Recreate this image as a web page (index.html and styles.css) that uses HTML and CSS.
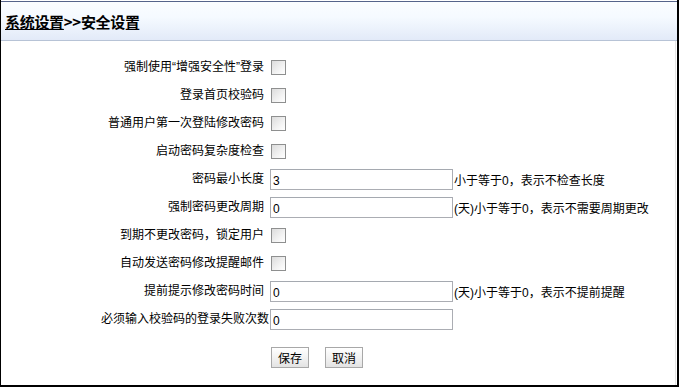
FILE: index.html
```html
<!DOCTYPE html>
<html>
  <head>
    <title>安全设置</title>
    <meta charset="UTF-8" />
    <link rel="stylesheet" href="styles.css">
  </head>
  <body>
    <div class="frame">
      <div class="header">
        <h1 class="title"><a class="crumb" href="#">系统设置</a>&gt;&gt;安全设置</h1>
      </div>
      <div class="content">
        <form class="settings">
          <label class="label">强制使用“增强安全性”登录</label>
          <div class="field"><input type="checkbox" class="check"></div>

          <label class="label">登录首页校验码</label>
          <div class="field"><input type="checkbox" class="check"></div>

          <label class="label">普通用户第一次登陆修改密码</label>
          <div class="field"><input type="checkbox" class="check"></div>

          <label class="label">启动密码复杂度检查</label>
          <div class="field"><input type="checkbox" class="check"></div>

          <label class="label">密码最小长度</label>
          <div class="field"><input type="text" class="text" value="3"><span class="hint">小于等于0，表示不检查长度</span></div>

          <label class="label">强制密码更改周期</label>
          <div class="field"><input type="text" class="text" value="0"><span class="hint">(天)小于等于0，表示不需要周期更改</span></div>

          <label class="label">到期不更改密码，锁定用户</label>
          <div class="field"><input type="checkbox" class="check"></div>

          <label class="label">自动发送密码修改提醒邮件</label>
          <div class="field"><input type="checkbox" class="check"></div>

          <label class="label">提前提示修改密码时间</label>
          <div class="field"><input type="text" class="text" value="0"><span class="hint">(天)小于等于0，表示不提前提醒</span></div>

          <label class="label label-long">必须输入校验码的登录失败次数</label>
          <div class="field"><input type="text" class="text" value="0"></div>

          <div class="buttons">
            <button type="button" class="btn">保存</button>
            <button type="button" class="btn">取消</button>
          </div>
        </form>
      </div>
    </div>
  </body>
</html>
```

FILE: styles.css
```css
html, body {
  margin: 0;
  padding: 0;
  background: #fff;
}

body {
  font-family: "Liberation Sans", "Noto Sans CJK SC", sans-serif;
  font-size: 12px;
  color: #000;
}

.frame {
  box-sizing: border-box;
  width: 679px;
  height: 387px;
  border-left: 1px solid #000;
  border-right: 2px solid #000;
  border-bottom: 2px solid #000;
  display: flex;
  flex-direction: column;
  overflow: hidden;
}

.header {
  flex-shrink: 0;
  box-sizing: border-box;
  height: 40px;
  margin-top: 1px;
  border-top: 1px solid #56648a;
  border-bottom: 1px solid #b7c3d6;
  background: linear-gradient(#fbfdff 0%, #f5faff 40%, #e2eaf8 100%);
  padding-left: 4px;
  padding-top: 1px;
  display: flex;
  align-items: center;
}

.title {
  margin: 0;
  font-family: "Noto Sans CJK SC", sans-serif;
  font-size: 15px;
  font-weight: bold;
  line-height: 18px;
  letter-spacing: -0.3px;
}

.crumb {
  color: #000;
  text-decoration: underline;
}

.content {
  flex: 1;
  border-right: 1px solid #e4e4e4;
  margin-right: 1px;
}

.settings {
  margin: 12px 0 0 95px;
  display: grid;
  grid-template-columns: 170px 1fr;
  grid-auto-rows: 28px;
  column-gap: 4px;
}

.label {
  text-align: right;
  align-self: center;
  padding-right: 2px;
  white-space: nowrap;
  line-height: 16px;
}

.label-long {
  padding-right: 0;
  margin-right: -3px;
}

.field {
  display: flex;
  align-items: center;
}

.check {
  appearance: none;
  box-sizing: border-box;
  width: 15px;
  height: 15px;
  margin: 0 0 0 1px;
  border: 1px solid #8e8f8f;
  background: linear-gradient(135deg, #dcdcdc, #f6f6f6 70%, #fff);
}

.text {
  box-sizing: border-box;
  width: 183px;
  height: 21px;
  margin: 0;
  padding: 3px 2px 0;
  border: 1px solid #abadb3;
  border-top-color: #a5a9b0;
  font-family: "Liberation Sans", sans-serif;
  font-size: 12px;
  color: #000;
  background: #fff;
}

.hint {
  margin-left: 1px;
  white-space: nowrap;
}

.buttons {
  grid-column: 2;
  grid-row: 11;
  display: flex;
  gap: 16px;
  align-items: flex-start;
  margin-top: 14px;
  padding-left: 1px;
}

.btn {
  box-sizing: border-box;
  width: 38px;
  height: 21px;
  padding: 0;
  border: 1px solid #a8a8a8;
  border-radius: 0;
  background: linear-gradient(#ffffff, #f2f2f2 50%, #e3e3e3);
  font-family: "Noto Sans CJK SC", sans-serif;
  font-size: 12px;
  color: #000;
}
```
